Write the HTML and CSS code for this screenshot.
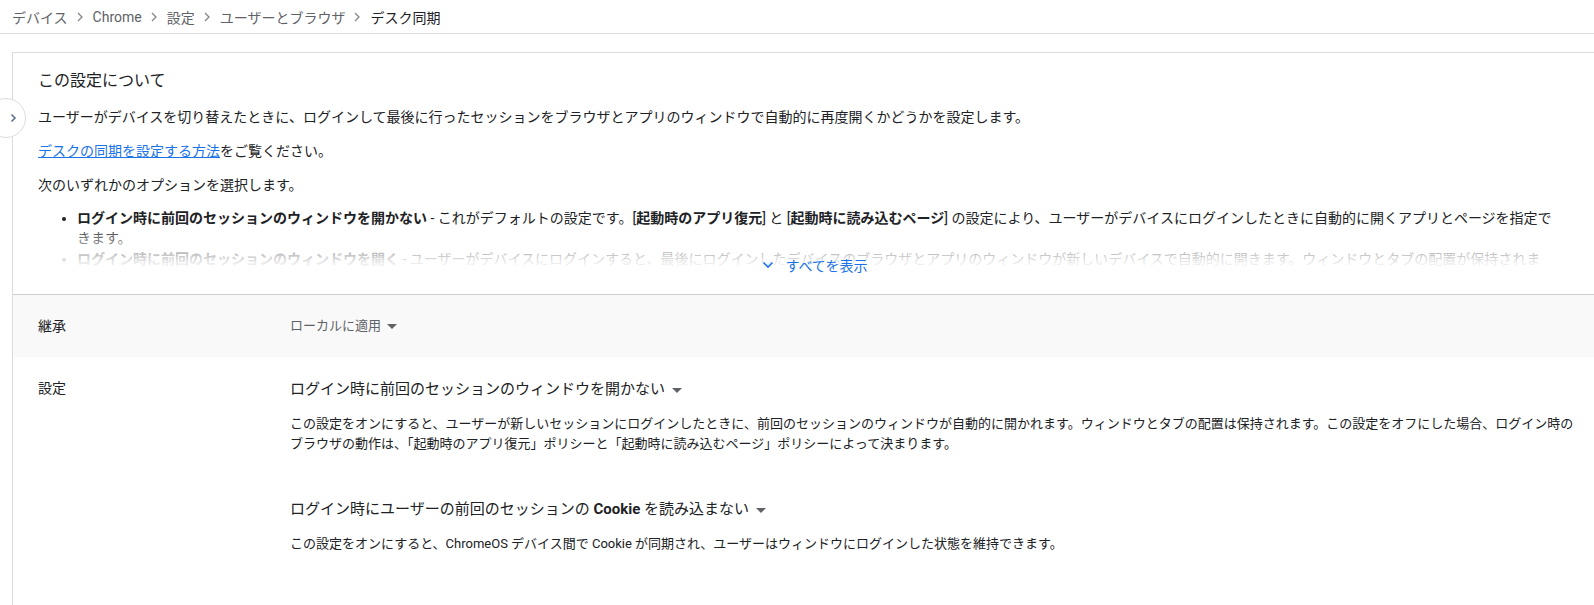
FILE: index.html
```html
<!DOCTYPE html>
<html lang="ja">

<head>
  <meta charset="UTF-8" />
  <meta name="viewport" content="width=device-width, initial-scale=1" />
  <title>デスク同期 - 設定</title>
  <link rel="stylesheet" href="styles.css">
</head>

<body>

  <nav class="breadcrumb">
    <span class="crumb">デバイス</span>
    <svg class="crumb-sep" viewBox="0 0 8 12"><path d="M2 2l4 4-4 4" /></svg>
    <span class="crumb">Chrome</span>
    <svg class="crumb-sep" viewBox="0 0 8 12"><path d="M2 2l4 4-4 4" /></svg>
    <span class="crumb">設定</span>
    <svg class="crumb-sep" viewBox="0 0 8 12"><path d="M2 2l4 4-4 4" /></svg>
    <span class="crumb">ユーザーとブラウザ</span>
    <svg class="crumb-sep" viewBox="0 0 8 12"><path d="M2 2l4 4-4 4" /></svg>
    <span class="crumb current">デスク同期</span>
  </nav>

  <main class="page">
    <button class="side-toggle" title="パネルを開く">
      <svg viewBox="0 0 12 12"><path d="M4.5 2.5l3.5 3.5-3.5 3.5" /></svg>
    </button>

    <section class="card">
      <div class="about">
        <h2>この設定について</h2>
        <p>ユーザーがデバイスを切り替えたときに、ログインして最後に行ったセッションをブラウザとアプリのウィンドウで自動的に再度開くかどうかを設定します。</p>
        <p><a href="#">デスクの同期を設定する方法</a>をご覧ください。</p>
        <p>次のいずれかのオプションを選択します。</p>
        <ul>
          <li><b>ログイン時に前回のセッションのウィンドウを開かない</b> - これがデフォルトの設定です。[<b>起動時のアプリ復元</b>] と [<b>起動時に読み込むページ</b>] の設定により、ユーザーがデバイスにログインしたときに自動的に開くアプリとページを指定できます。</li>
          <li><b>ログイン時に前回のセッションのウィンドウを開く</b> - ユーザーがデバイスにログインすると、最後にログインしたデバイスのブラウザとアプリのウィンドウが新しいデバイスで自動的に開きます。ウィンドウとタブの配置が保持されます。</li>
        </ul>
        <div class="fade">
          <button class="show-all">
            <svg viewBox="0 0 14 14"><path d="M2.5 4.5l4.5 4.5 4.5-4.5" /></svg>
            すべてを表示
          </button>
        </div>
      </div>

      <div class="row row-inherit">
        <div class="row-label">継承</div>
        <div class="row-value">
          <span class="dropdown small">ローカルに適用 <span class="caret"></span></span>
        </div>
      </div>

      <div class="row">
        <div class="row-label">設定</div>
        <div class="row-value">
          <div class="option">
            <div class="dropdown">ログイン時に前回のセッションのウィンドウを開かない <span class="caret"></span></div>
            <p class="option-desc">この設定をオンにすると、ユーザーが新しいセッションにログインしたときに、前回のセッションのウィンドウが自動的に開かれます。ウィンドウとタブの配置は保持されます。この設定をオフにした場合、ログイン時のブラウザの動作は、「起動時のアプリ復元」ポリシーと「起動時に読み込むページ」ポリシーによって決まります。</p>
          </div>
          <div class="option">
            <div class="dropdown">ログイン時にユーザーの前回のセッションの <b>Cookie</b> を読み込まない <span class="caret"></span></div>
            <p class="option-desc">この設定をオンにすると、ChromeOS デバイス間で Cookie が同期され、ユーザーはウィンドウにログインした状態を維持できます。</p>
          </div>
        </div>
      </div>
    </section>
  </main>

</body>

</html>
```

FILE: styles.css
```css
body {
  font-family: Roboto, "Noto Sans CJK JP", sans-serif;
  margin: 0;
  background-color: #fff;
  color: #202124;
  overflow: hidden;
}

.breadcrumb {
  display: flex;
  align-items: center;
  height: 33px;
  padding: 0 12px;
  border-bottom: 1px solid #e0e0e0;
  font-size: 14px;
  color: #5f6368;
}

.crumb.current {
  color: #202124;
}

.crumb-sep {
  width: 8px;
  height: 12px;
  margin: 0 9px 0 8px;
  fill: none;
  stroke: #80868b;
  stroke-width: 1.3;
}

.page {
  position: relative;
  padding: 18px 0 0 12px;
}

.side-toggle {
  position: absolute;
  left: -14px;
  top: 64px;
  width: 40px;
  height: 40px;
  border-radius: 50%;
  background: #fff;
  border: 1px solid #dadce0;
  padding: 0 0 0 14px;
  display: flex;
  align-items: center;
  justify-content: center;
  z-index: 5;
  cursor: pointer;
}

.side-toggle svg {
  width: 12px;
  height: 12px;
  fill: none;
  stroke: #5b7390;
  stroke-width: 1.6;
}

.card {
  border-top: 1px solid #dadce0;
  border-left: 1px solid #dadce0;
  min-height: 560px;
}

.about {
  position: relative;
  height: 225px;
  overflow: hidden;
  padding: 16px 37px 0 25px;
  border-bottom: 1px solid #cfcfcf;
}

.about h2 {
  margin: 0;
  font-size: 16px;
  font-weight: 400;
  line-height: 24px;
}

.about p {
  margin: 14px 0 0;
  font-size: 14px;
  line-height: 20px;
}

.about a {
  color: #1a73e8;
}

.about ul {
  margin: 13px 0 0;
  padding-left: 39px;
  font-size: 14px;
  line-height: 20.4px;
}

.about b {
  font-weight: 700;
}

.fade {
  position: absolute;
  left: 0;
  right: 0;
  bottom: 0;
  height: 72px;
  background: linear-gradient(rgba(255, 255, 255, 0) 0, rgba(255, 255, 255, 0.45) 20px, rgba(255, 255, 255, 0.9) 40px, #fff 50px, #fff 100%);
  display: flex;
  justify-content: center;
  align-items: flex-end;
  padding: 0 0 19px 22px;
  box-sizing: border-box;
}

button.show-all {
  display: flex;
  align-items: center;
  gap: 10px;
  background: transparent;
  border: none;
  color: #1a73e8;
  font-family: inherit;
  font-size: 14px;
  padding: 0;
  cursor: pointer;
}

button.show-all svg {
  width: 14px;
  height: 14px;
  fill: none;
  stroke: #1a73e8;
  stroke-width: 1.6;
}

.row {
  display: flex;
  padding: 21px 0 40px 25px;
}

.row-inherit {
  background-color: #f9f9f9;
  align-items: center;
  height: 62px;
  padding: 0 0 0 25px;
  box-sizing: border-box;
}

.row-label {
  width: 252px;
  flex-shrink: 0;
  font-size: 14px;
  line-height: 20px;
}

.row-value {
  flex: 1;
  padding-right: 16px;
}

.dropdown {
  font-size: 15px;
  line-height: 22px;
  color: #202124;
}

.dropdown.small {
  font-size: 13px;
  color: #5f6368;
}

.caret {
  display: inline-block;
  width: 0;
  height: 0;
  margin-left: 3px;
  border-left: 5px solid transparent;
  border-right: 5px solid transparent;
  border-top: 5px solid #5f6368;
  vertical-align: middle;
}

.option + .option {
  margin-top: 44px;
}

.option-desc {
  margin: 14px 0 0;
  font-size: 13px;
  line-height: 20px;
}
```
